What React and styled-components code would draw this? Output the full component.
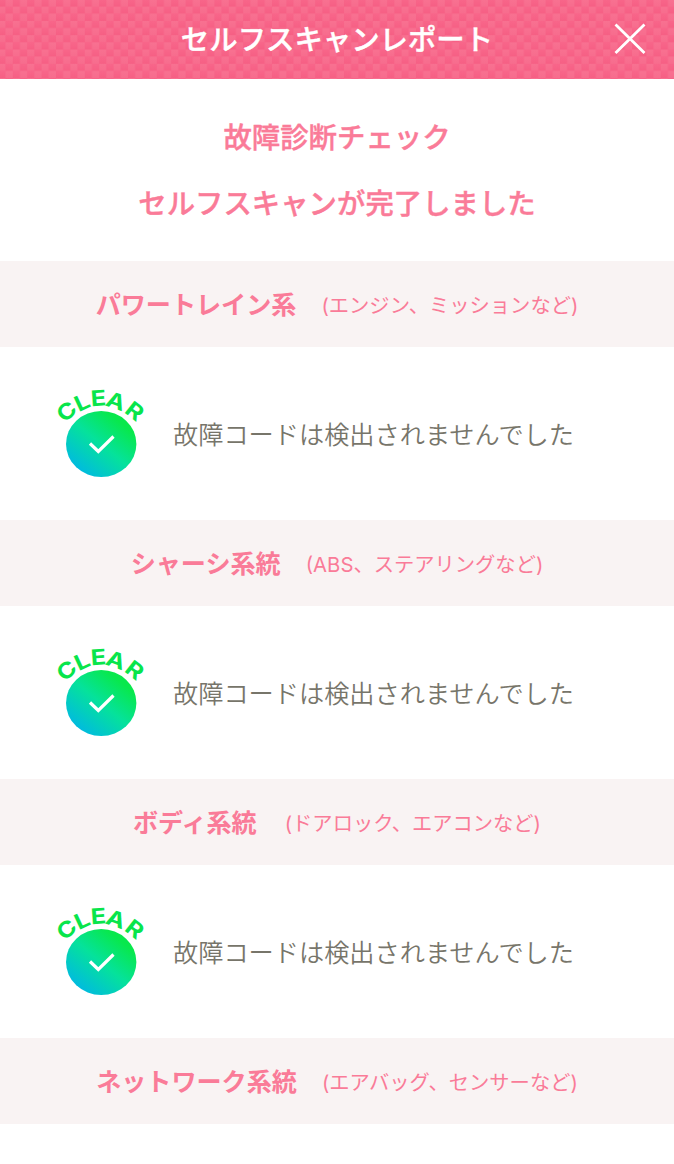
import React from "react";
import styled, { createGlobalStyle } from "styled-components";

const GlobalStyle = createGlobalStyle`
  * {
    box-sizing: border-box;
  }

  body {
    margin: 0;
    background: #ffffff;
    font-family: "Noto Sans CJK JP", sans-serif;
    overflow: hidden;
  }

  h1, h2, h3, p {
    margin: 0;
  }
`

const Page = styled.div`
  width: 674px;
  height: 1164px;
  overflow: hidden;
`

const Header = styled.header`
  position: relative;
  display: flex;
  align-items: center;
  justify-content: center;
  height: 79px;
  padding-bottom: 3px;
  background: #f7668a;
`

const Weave = styled.svg`
  position: absolute;
  inset: 0;
  width: 100%;
  height: 100%;
`

const Title = styled.h1`
  position: relative;
  color: white;
  font-size: 28.4px;
  font-weight: 500;
  line-height: 40px;
  white-space: nowrap;
  -webkit-text-stroke: 0.4px white;
`

const CloseButton = styled.button`
  position: absolute;
  top: 22px;
  right: 27px;
  width: 34px;
  height: 34px;
  padding: 0;
  border: none;
  background: none;

  svg {
    display: block;
  }
`

const Summary = styled.div`
  display: flex;
  flex-direction: column;
  align-items: center;
  height: 182px;
  padding-top: 24px;
`

const SummaryLine = styled.h2`
  color: #fa7b98;
  font-size: 28.4px;
  font-weight: 500;
  line-height: 65.5px;
  white-space: nowrap;
  -webkit-text-stroke: 0.4px #fa7b98;
`

const SectionHeader = styled.div`
  display: flex;
  align-items: center;
  justify-content: center;
  gap: ${(props) => props.$gap}px;
  height: 86.3px;
  background-color: #f9f3f3;
  color: #fa7b98;
  white-space: nowrap;
`

const SectionName = styled.h3`
  padding-bottom: 2px;
  font-size: 25.1px;
  font-weight: 700;
  line-height: 36px;
`

const SectionNote = styled.p`
  padding-top: 3px;
  font-family: "Inter", "Noto Sans CJK JP", sans-serif;
  font-size: 20.3px;
  font-weight: 370;
  line-height: 36px;
`

const Result = styled.div`
  display: flex;
  align-items: center;
  height: 172.7px;
  padding-left: 51px;
`

const ResultText = styled.p`
  margin-left: 22px;
  padding-bottom: 2px;
  color: #77756a;
  font-size: 25.2px;
  font-weight: 350;
  line-height: 36px;
  white-space: nowrap;
`

const Letter = styled.text`
  fill: #08e54b;
  font-family: "Inter", sans-serif;
  font-size: 22px;
  font-weight: 650;
  text-anchor: middle;
`

// center and tilt of each letter along the arc
const letters = [
    { char: "C", x: 15.3, y: 32.3, angle: -40 },
    { char: "L", x: 30.8, y: 23, angle: -25 },
    { char: "E", x: 47.3, y: 19, angle: -4 },
    { char: "A", x: 65, y: 22, angle: 19 },
    { char: "R", x: 84, y: 32, angle: 38 },
]

const sections = [
    { name: "パワートレイン系", note: "(エンジン、ミッションなど)", gap: 25 },
    { name: "シャーシ系統", note: "(ABS、ステアリングなど)", gap: 25 },
    { name: "ボディ系統", note: "(ドアロック、エアコンなど)", gap: 28 },
    { name: "ネットワーク系統", note: "(エアバッグ、センサーなど)", gap: 25 },
]

const HeaderWeave = () => (
    <Weave aria-hidden="true">
        <defs>
            <linearGradient id="cell" x1="0" y1="0" x2="0" y2="1">
                <stop offset="0" stopColor="#f87191" />
                <stop offset="0.5" stopColor="#f76c8d" />
                <stop offset="0.5" stopColor="#f8668a" />
                <stop offset="1" stopColor="#f65f84" />
            </linearGradient>
            <pattern id="weave" x="-1.6" y="6.6" width="14.4" height="14.3" patternUnits="userSpaceOnUse">
                <rect width="7.2" height="14.3" fill="url(#cell)" />
                <rect x="7.2" y="-7.15" width="7.2" height="14.3" fill="url(#cell)" />
                <rect x="7.2" y="7.15" width="7.2" height="14.3" fill="url(#cell)" />
            </pattern>
        </defs>
        <rect width="100%" height="100%" fill="url(#weave)" />
    </Weave>
)

const ClearBadge = ({ id }) => (
    <svg width="100" height="110" viewBox="0 0 100 110">
        <defs>
            <linearGradient id={id} x1="0.15" y1="0.9" x2="0.85" y2="0.1">
                <stop offset="0" stopColor="#00b9e2" />
                <stop offset="0.5" stopColor="#05e29b" />
                <stop offset="0.9" stopColor="#08e84c" />
            </linearGradient>
        </defs>
        {letters.map(({ char, x, y, angle }) => (
            <Letter key={char} transform={`translate(${x} ${y}) rotate(${angle}) scale(1.15 0.98)`} y="8">{char}</Letter>
        ))}
        <ellipse cx="50.2" cy="65" rx="35.2" ry="33" fill={`url(#${id})`} />
        <path d="M39 64.5 L47.3 72.5 L62.5 57.5" fill="none" stroke="white" strokeWidth="3.2" />
    </svg>
)

export default function App() {
    return (
        <>
            <GlobalStyle />
            <Page>
                <Header>
                    <HeaderWeave />
                    <Title>セルフスキャンレポート</Title>
                    <CloseButton aria-label="閉じる">
                        <svg width="34" height="34" viewBox="0 0 34 34">
                            <path d="M2.5 2.5 L31.5 31 M31.5 2.5 L2.5 31" stroke="white" strokeWidth="2.8" />
                        </svg>
                    </CloseButton>
                </Header>
                <Summary>
                    <SummaryLine>故障診断チェック</SummaryLine>
                    <SummaryLine>セルフスキャンが完了しました</SummaryLine>
                </Summary>
                {sections.map((section, idx) => (
                    <React.Fragment key={section.name}>
                        <SectionHeader $gap={section.gap}>
                            <SectionName>{section.name}</SectionName>
                            <SectionNote>{section.note}</SectionNote>
                        </SectionHeader>
                        {idx < sections.length - 1 &&
                            <Result>
                                <ClearBadge id={`badge${idx}`} />
                                <ResultText>故障コードは検出されませんでした</ResultText>
                            </Result>
                        }
                    </React.Fragment>
                ))}
            </Page>
        </>
    )
}
